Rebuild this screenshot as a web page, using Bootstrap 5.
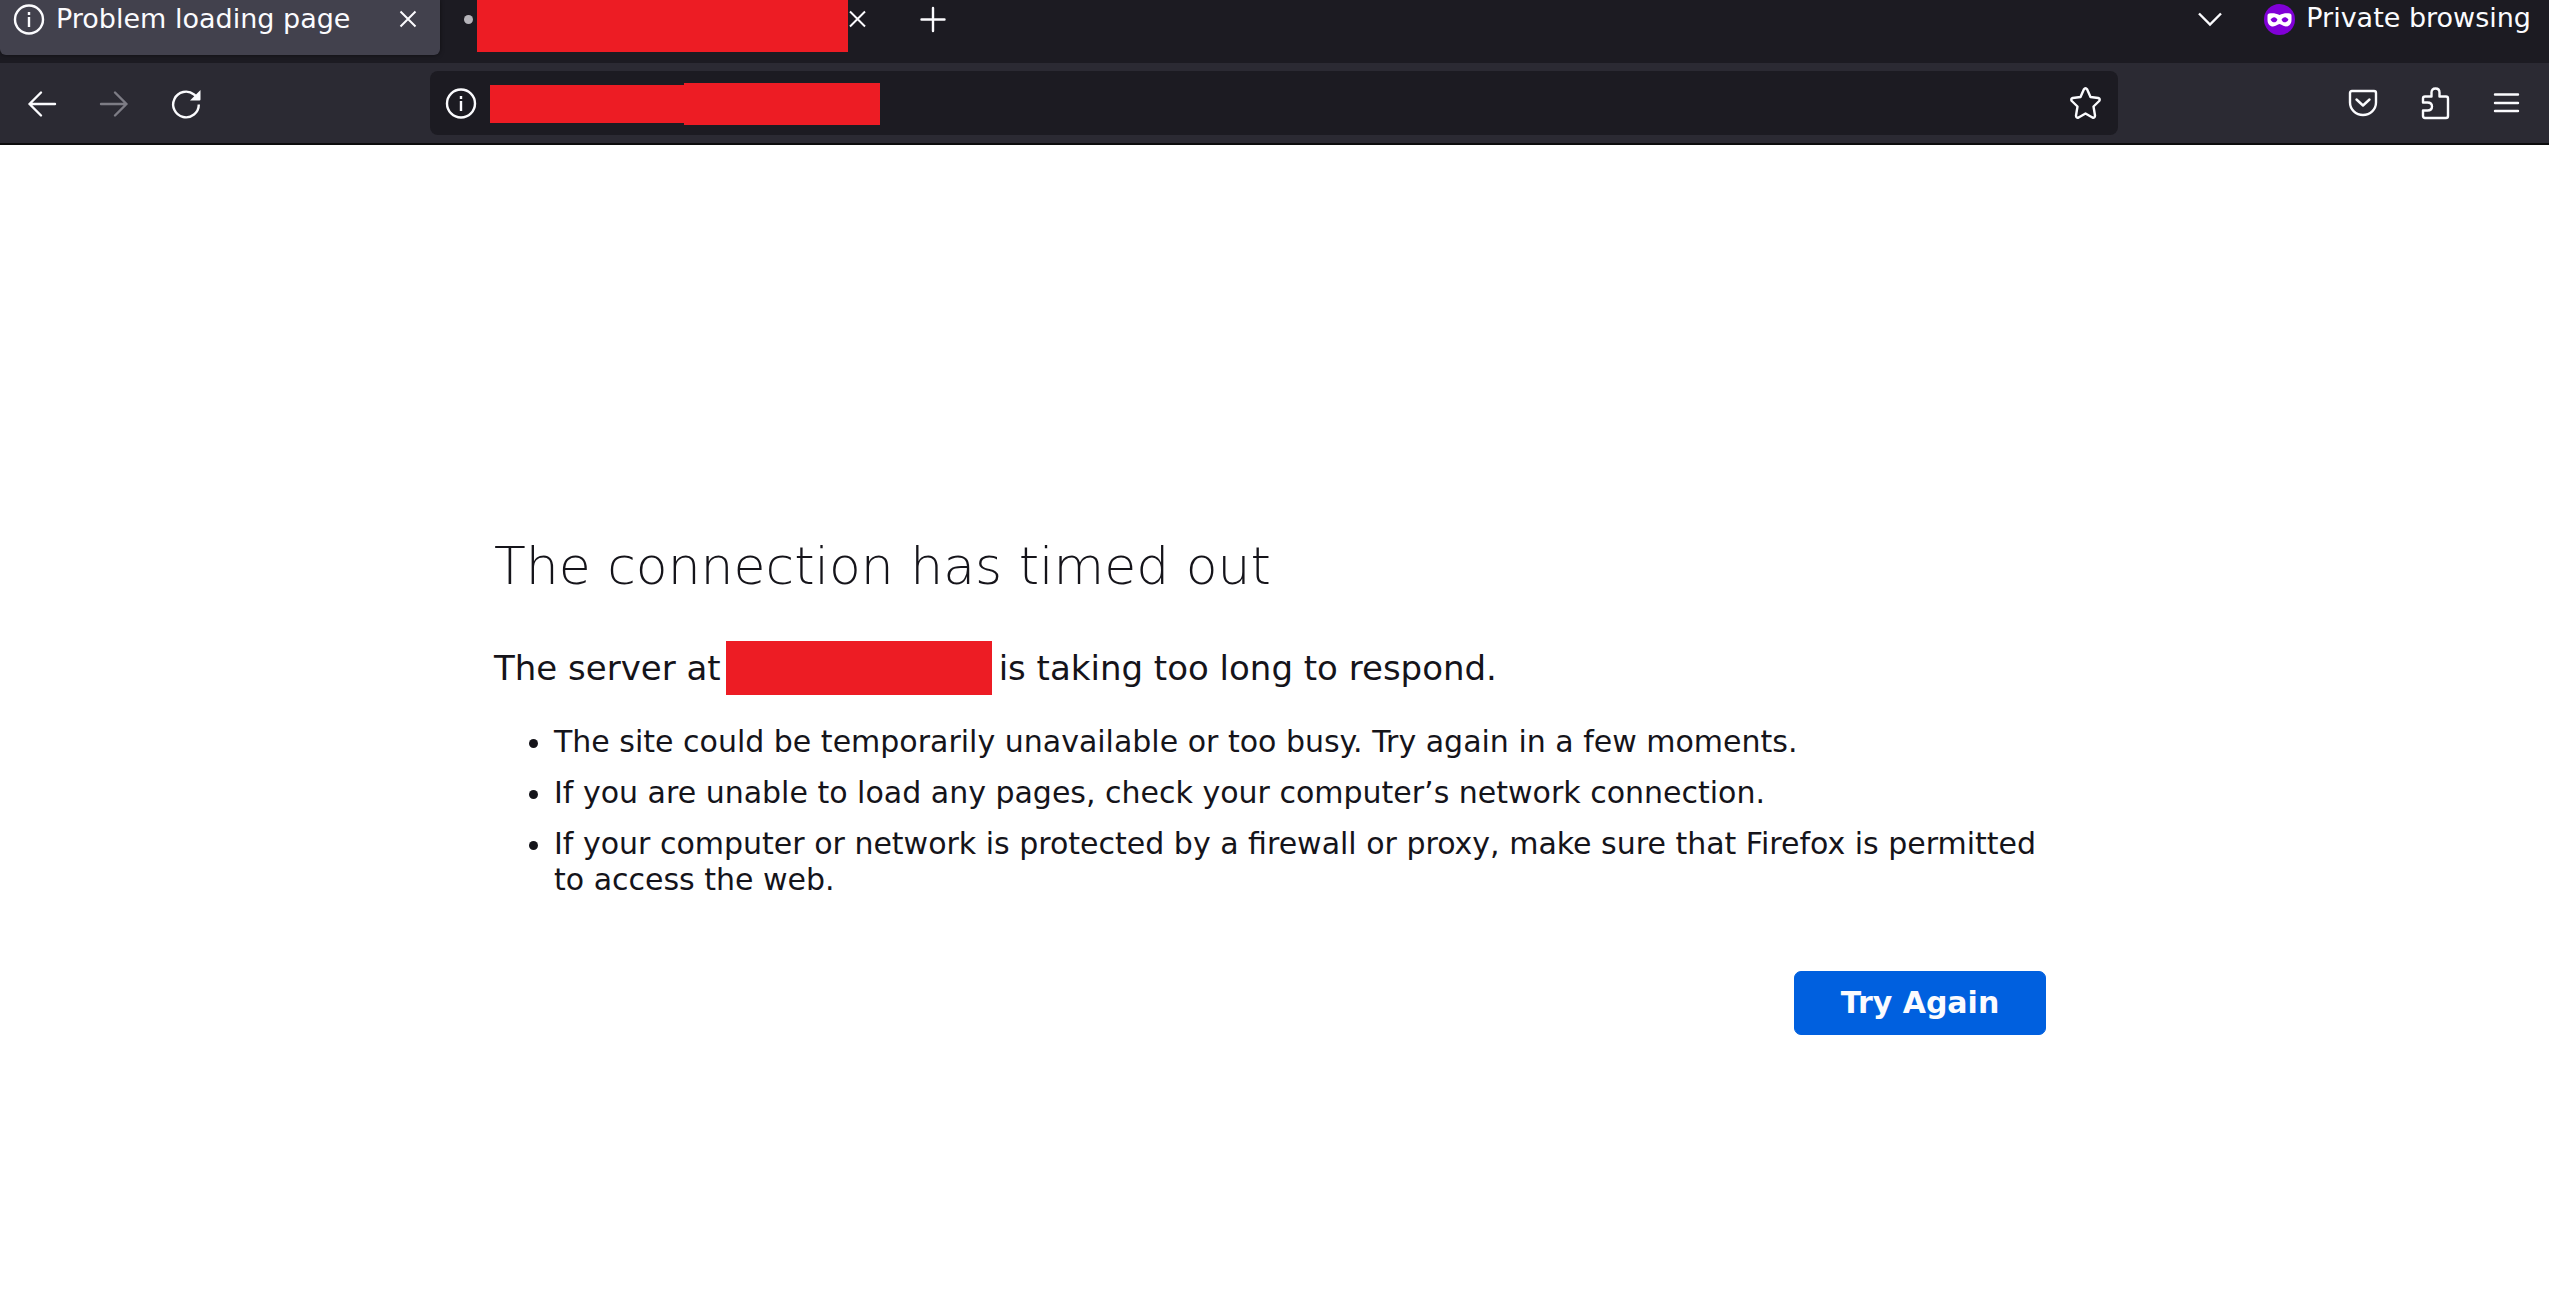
<!DOCTYPE html>
<html lang="en">
<head>
<meta charset="utf-8">
<meta name="viewport" content="width=device-width, initial-scale=1">
<title>Problem loading page</title>
<link rel="stylesheet" href="https://cdn.jsdelivr.net/npm/bootstrap@5.3.0/dist/css/bootstrap.min.css">
<style>
  body { font-family: "DejaVu Sans", sans-serif; color: #15141a; background: #fff; }
  svg { display: block; fill: none; stroke: currentColor; stroke-width: 2.4; overflow: visible; flex: none; }
  .chrome-btn { border: 0; padding: 0; background: none; color: #fbfbfe; display: block; flex: none; }
  .chrome-btn:disabled { color: #7d7c85; }
  .tab-strip { height: 63px; background: #1c1b22; color: #fbfbfe; font-size: 27px; line-height: 32px; }
  .browser-tab { height: 55px; padding-bottom: 17px; }
  .tab-active { width: 440px; background: #42414d; border-radius: 0 0 6px 6px; padding-left: 14px; padding-right: 24px; gap: 12px; box-shadow: 0 0 4px rgba(0, 0, 0, .5); }
  .tab-second { padding-left: 24px; }
  .load-dot { width: 9px; height: 9px; background: #b5b4ba; margin-right: 4px; }
  .redacted { background: #ed1c24; flex: none; }
  .redacted-title { width: 371px; height: 52px; }
  .tab-tools { height: 55px; padding-bottom: 15px; }
  .tab-new { padding-left: 53px; }
  .tabs-end { gap: 42px; padding-bottom: 17px; }
  .private-label { gap: 11px; padding-right: 18px; }
  .private-label span { padding-bottom: 3px; }
  .tool-bar { height: 82px; background: #2b2a33; border-bottom: 2px solid #0c0c0d; color: #fbfbfe; }
  .nav-group { width: 430px; padding: 2px 0 0 28px; gap: 44px; }
  .url-box { height: 64px; background: #1c1b22; border-radius: 8px; padding: 0 17px 0 16px; gap: 14px; }
  .redacted-url-a { width: 194px; height: 38px; }
  .redacted-url-b { width: 196px; height: 42px; }
  .url-text { padding-top: 2px; }
  .url-input { background: transparent; border: 0; outline: 0; color: #fbfbfe; font-size: 27px; min-width: 0; }
  .menu-group { width: 431px; padding-right: 30px; gap: 45px; }
  .error-page { padding: 390px 9px 48px 0; }
  .error-body { max-width: 1552px; }
  .error-title { font-size: 52px; line-height: 62px; font-weight: 200; margin-bottom: 44px; }
  .error-desc { font-size: 34px; line-height: 40px; margin-bottom: 29px; }
  .redacted-host { width: 266px; height: 54px; margin: 0 7px 0 5px; }
  .error-list { font-size: 30px; line-height: 36px; padding-left: 60px; margin-bottom: 73px; }
  .error-list li + li { margin-top: 15px; }
  .retry-btn { width: 252px; height: 64px; padding: 0; font-size: 30px; line-height: 36px; font-weight: 700; border-radius: 7px;
    --bs-btn-bg: #0060df; --bs-btn-border-color: #0060df; --bs-btn-color: #fbfbfe; }
</style>
<script src="https://cdn.jsdelivr.net/npm/bootstrap@5.3.0/dist/js/bootstrap.bundle.min.js"></script>
</head>
<body>
<header>
  <div class="tab-strip d-flex align-items-start">
    <div class="browser-tab tab-active d-flex align-items-center">
      <svg width="30" height="31" viewBox="0 0 30 31"><circle cx="15" cy="15.5" r="14"/><path d="M15 13v10M15 8v3"/></svg>
      <span class="me-auto text-nowrap">Problem loading page</span>
      <button class="chrome-btn" aria-label="Close tab"><svg width="16" height="16" viewBox="0 0 16 16"><path stroke-width="2" d="M.5 .5l15 15M15.5 .5l-15 15"/></svg></button>
    </div>
    <div class="d-flex align-items-start">
      <div class="browser-tab tab-second d-flex align-items-center"><span class="load-dot rounded-circle"></span></div>
      <div class="redacted redacted-title"></div>
      <div class="browser-tab d-flex align-items-center">
        <button class="chrome-btn" aria-label="Close tab"><svg width="18" height="16" viewBox="0 0 18 16"><path stroke-width="2" d="M2 .5l15 15M17 .5l-15 15"/></svg></button>
      </div>
    </div>
    <div class="tab-tools tab-new d-flex align-items-center">
      <button class="chrome-btn" aria-label="New tab"><svg width="26" height="26" viewBox="0 0 26 26" stroke-linecap="round"><path d="M14 1v23M2.5 12.5h23"/></svg></button>
    </div>
    <div class="tab-tools tabs-end d-flex align-items-center ms-auto">
      <button class="chrome-btn" aria-label="List all tabs"><svg width="24" height="14" viewBox="0 0 24 14"><path d="M1 1.5l11 11 11-11"/></svg></button>
      <div class="private-label d-flex align-items-center">
        <svg width="31" height="31" viewBox="0 0 31 31"><circle cx="15.5" cy="15.5" r="15.5" fill="#8000d7" stroke="none"/><path fill="#fff" stroke="none" fill-rule="evenodd" d="M15.500 11C12 9 8 9 5 9.500Q3.500 9.800 3.500 11.500V16c0 4 2.500 6.500 5.500 6.500 3 0 4.500-2.500 6.500-2.500s3.500 2.500 6.500 2.500c3 0 5.500-2.500 5.500-6.500V11.500Q27.500 9.800 26 9.500C23 9 19 9 15.500 11zM6.500 15.800C8.500 12.400 12 12.400 13.500 15.800 12 19.200 8.500 19.200 6.500 15.800zM17.500 15.800C19 12.400 22.500 12.400 24.500 15.800 22.500 19.200 19 19.200 17.500 15.800z"/></svg>
        <span class="text-nowrap">Private browsing</span>
      </div>
    </div>
  </div>

  <div class="tool-bar d-flex align-items-center">
    <div class="nav-group d-flex align-items-center">
      <button class="chrome-btn" aria-label="Back"><svg width="28" height="26" viewBox="0 0 28 26" stroke-linecap="round" stroke-linejoin="round"><path d="M27 13H1.500M13 1.500L1.500 13 13 24.500"/></svg></button>
      <button class="chrome-btn" aria-label="Forward" disabled><svg width="28" height="26" viewBox="0 0 28 26" stroke-linecap="round" stroke-linejoin="round"><path d="M1 13h25.500M15 1.500L26.500 13 15 24.500"/></svg></button>
      <button class="chrome-btn" aria-label="Reload"><svg width="28" height="28" viewBox="0 0 28 28"><path d="M26.800 14.500A12.800 12.800 0 1 1 22 4.500L25 7"/><path fill="currentColor" stroke="none" d="M28.500 0v9.500q0 1-1 1H18z"/></svg></button>
    </div>
    <div class="url-box d-flex align-items-center flex-grow-1">
      <svg width="30" height="31" viewBox="0 0 30 31"><circle cx="15" cy="15.5" r="14"/><path d="M15 13v10M15 8v3"/></svg>
      <div class="url-text d-flex align-items-center flex-grow-1">
        <div class="redacted redacted-url-a"></div>
        <div class="redacted redacted-url-b"></div>
        <input class="url-input flex-grow-1" type="text" aria-label="Address">
      </div>
      <button class="chrome-btn" aria-label="Bookmark this page"><svg width="31" height="32" viewBox="0 0 31 32" stroke-linejoin="round"><path d="M13.800 2.500q1.700-2.600 3.400 0L20.500 10l7.700 1q2.500.8 1 3L23.500 19.500 25 28.500q0 2.800-2.600 2L15.500 26.500 8.600 30.500q-2.600.8-2.600-2L7.500 19.500 1.800 14q-1.500-2.200 1-3l7.700-1z"/></svg></button>
    </div>
    <div class="menu-group d-flex align-items-center justify-content-end">
      <button class="chrome-btn" aria-label="Save to Pocket"><svg width="28" height="26" viewBox="0 0 28 26" stroke-linejoin="round" stroke-linecap="round"><path d="M3 1h22q2 0 2 2v9.500a13 12.500 0 0 1-26 0V3q0-2 2-2zM7.500 9.500L14 15.500 20.500 9.500"/></svg></button>
      <button class="chrome-btn" aria-label="Extensions"><svg width="27" height="32" viewBox="0 0 27 32" stroke-linejoin="round"><path d="M3 9.500H9.500V5.500q0-4 4-4t4 4V9.500H24q2 0 2 2V29q0 2-2 2H3q-2 0-2-2V23.500H5.500q4.500 0 4.500-4t-4.500-4H1V11.500q0-2 2-2z"/></svg></button>
      <button class="chrome-btn" aria-label="Open menu"><svg width="25" height="20" viewBox="0 0 25 20" stroke-linecap="round"><path d="M1 1.500h23M1 10h23M1 18h23"/></svg></button>
    </div>
  </div>
</header>

<main class="error-page">
  <div class="error-body mx-auto">
    <h1 class="error-title">The connection has timed out</h1>
    <p class="error-desc d-flex align-items-center flex-wrap"><span>The server at</span><span class="redacted redacted-host"></span><span>is taking too long to respond.</span></p>
    <ul class="error-list">
      <li>The site could be temporarily unavailable or too busy. Try again in a few moments.</li>
      <li>If you are unable to load any pages, check your computer’s network connection.</li>
      <li>If your computer or network is protected by a firewall or proxy, make sure that Firefox is permitted to access the web.</li>
    </ul>
    <div class="d-flex justify-content-end">
      <button class="btn btn-primary retry-btn" type="button">Try Again</button>
    </div>
  </div>
</main>
</body>
</html>
